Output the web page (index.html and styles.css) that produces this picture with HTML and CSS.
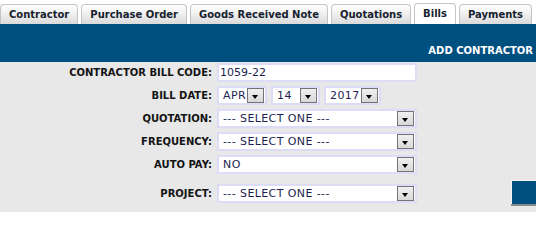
FILE: index.html
```html
<!DOCTYPE html>
<html lang="en">

<head>
    <meta charset="UTF-8">
    <title>Bills - Add Contractor</title>
    <link rel="stylesheet" href="styles.css">
</head>

<body>
    <nav class="tabs">
        <a class="tab">Contractor</a>
        <a class="tab">Purchase Order</a>
        <a class="tab">Goods Received Note</a>
        <a class="tab">Quotations</a>
        <a class="tab active">Bills</a>
        <a class="tab">Payments</a>
    </nav>
    <div class="banner">
        <span>ADD CONTRACTOR</span>
    </div>
    <div class="form">
        <div class="row">
            <label>CONTRACTOR BILL CODE:</label>
            <div class="field text wide">1059-22</div>
        </div>
        <div class="row">
            <label>BILL DATE:</label>
            <div class="dates">
                <div class="field select month"><span>APR</span><i class="arrow"></i></div>
                <div class="field select day"><span>14</span><i class="arrow"></i></div>
                <div class="field select year"><span>2017</span><i class="arrow"></i></div>
            </div>
        </div>
        <div class="row">
            <label>QUOTATION:</label>
            <div class="field select wide"><span>--- SELECT ONE ---</span><i class="arrow"></i></div>
        </div>
        <div class="row">
            <label>FREQUENCY:</label>
            <div class="field select wide"><span>--- SELECT ONE ---</span><i class="arrow"></i></div>
        </div>
        <div class="row">
            <label>AUTO PAY:</label>
            <div class="field select wide"><span>NO</span><i class="arrow"></i></div>
        </div>
        <div class="row project">
            <label>PROJECT:</label>
            <div class="field select wide"><span>--- SELECT ONE ---</span><i class="arrow"></i></div>
            <button type="button" class="save"></button>
        </div>
    </div>
</body>

</html>
```

FILE: styles.css
```css
* {
    box-sizing: border-box;
}

html,
body {
    overflow: hidden;
}

body {
    margin: 0;
    background: #fff;
    font-family: "DejaVu Sans", Verdana, sans-serif;
}

.tabs {
    display: flex;
    align-items: flex-end;
    gap: 3px;
    height: 24px;
    padding-top: 3px;
}

.tab {
    flex: none;
    height: 20px;
    padding: 0 8px;
    line-height: 20px;
    font-size: 10px;
    font-weight: bold;
    color: #16222f;
    white-space: nowrap;
    border: 1px solid #c4c4c4;
    border-bottom: none;
    border-radius: 4px 4px 0 0;
    background: linear-gradient(#ffffff, #f2f2f2 40%, #dadada);
}

.tab.active {
    height: 21px;
    line-height: 19px;
    background: #fff;
}

.banner {
    display: flex;
    justify-content: flex-end;
    align-items: flex-end;
    height: 38px;
    padding: 0 3px 6px 0;
    background: #00507f;
    color: #fff;
    font-size: 10px;
    font-weight: bold;
    white-space: nowrap;
}

.form {
    display: flex;
    flex-direction: column;
    gap: 4px;
    padding: 1px 0 9px;
    background: #e8e8e8;
}

.row {
    display: flex;
    align-items: center;
    height: 19px;
}

.row.project {
    margin-top: 6px;
}

.row label {
    flex: none;
    width: 217px;
    padding-right: 5px;
    text-align: right;
    font-size: 10px;
    font-weight: bold;
    color: #141414;
    white-space: nowrap;
}

.field {
    flex: none;
    display: flex;
    align-items: center;
    height: 19px;
    border: 2px solid #dcdcf7;
    background: #fff;
    font-size: 11px;
    color: #1e1e52;
    white-space: nowrap;
}

.field.text {
    padding-left: 1px;
}

.field.wide {
    width: 200px;
}

.field.select span {
    flex-grow: 1;
    padding-left: 4px;
    letter-spacing: 0.4px;
}

.dates {
    display: flex;
    gap: 4px;
}

.month {
    width: 50px;
}

.day {
    width: 49px;
}

.year {
    width: 57px;
}

.arrow {
    position: relative;
    flex: none;
    width: 17px;
    height: 15px;
    margin-right: 1px;
    border: 1px solid #747474;
    background: linear-gradient(#f0f0f0, #d8d8d8);
}

.arrow::after {
    content: "";
    position: absolute;
    left: 4px;
    bottom: 3px;
    border-style: solid;
    border-width: 4px 3.5px 0;
    border-color: #000 transparent transparent;
}

.save {
    flex: none;
    width: 25px;
    height: 24px;
    margin: -4px 0 0 94px;
    padding: 0;
    border: none;
    border-top: 1px solid #f4f4f4;
    border-left: 1px solid #f4f4f4;
    background: #00507f;
    box-shadow: 0 2px 0 #8a8a8a;
}
```
